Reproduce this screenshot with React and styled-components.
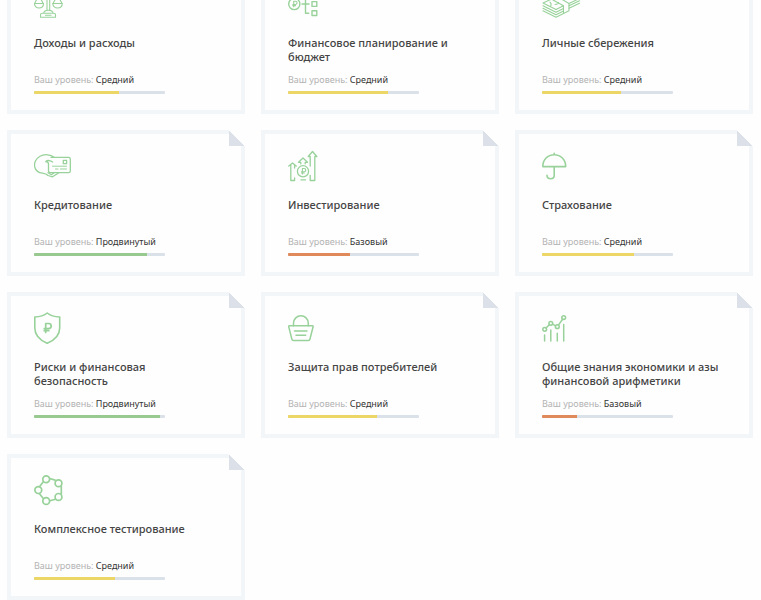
import React from "react";
import styled, { createGlobalStyle } from "styled-components";

const GlobalStyle = createGlobalStyle`
  body {
    margin: 0;
    background-color: #fefefe;
    font-family: "Noto Sans", "Open Sans", sans-serif;
    color: #444444;
    overflow-x: hidden;
  }
`;

const Page = styled.main`
  overflow: hidden;
`;

// the list is shown scrolled a little, so the first row starts above the page
const CardGrid = styled.div`
  display: grid;
  grid-template-columns: repeat(3, 1fr);
  gap: 16px;
  padding: 0 8px 0 7px;
  margin-top: -32px;
`;

const Card = styled.article`
  position: relative;
  box-sizing: border-box;
  display: flex;
  flex-direction: column;
  padding: 16px 23px;
  border: 4px solid #f3f6f9;

  &::after {
    content: "";
    position: absolute;
    top: -4px;
    right: -4px;
    width: 16px;
    height: 16px;
    background: linear-gradient(45deg, #dce1e9 50%, #fefefe 50%);
  }
`;

const Icon = styled.svg`
  width: 40px;
  height: 32px;
  fill: none;
  stroke: #98d29a;
  stroke-width: ${(props) => props.$weight || 1.3};
  stroke-linecap: round;
  stroke-linejoin: round;
`;

const Title = styled.h2`
  margin: 16px 0 0;
  min-height: 28px;
  font-size: 11px;
  line-height: 14px;
  font-weight: 500;
`;

const Level = styled.p`
  margin: 10px 0 5px;
  font-size: 9px;
  line-height: 12px;
  color: #b3b3b3;
`;

const LevelName = styled.span`
  color: #333333;
`;

const Track = styled.div`
  width: 131px;
  max-width: 100%;
  height: 3px;
  border-radius: 1px;
  background-color: #dbe1e8;
  overflow: hidden;
`;

const Fill = styled.div`
  height: 100%;
  background-color: ${(props) => props.$color};
`;

const LEVELS = {
  basic: { name: "Базовый", color: "#e08a5c" },
  middle: { name: "Средний", color: "#ecd766" },
  advanced: { name: "Продвинутый", color: "#98c98f" },
};

const Ruble = ({ x, y, size, weight }) => (
  <g transform={`translate(${x} ${y}) scale(${size / 10})`}>
    <path
      d="M-2 5V-5H1.2a2.9 2.9 0 0 1 0 5.8H-3.6M-3.6 3H1.4"
      vectorEffect="non-scaling-stroke"
      strokeWidth={weight}
    />
  </g>
);

const ScalesIcon = () => (
  <Icon viewBox="0 0 40 32" $weight={1.1}>
    <path d="M13 5v17M15.7 5v17M4.8 7h19M4.8 7L.6 15.5M4.8 7l4.4 8.5M23.6 7L19 15.5M23.6 7l4.4 8.5" />
    <path d="M.5 15.5h9c0 6-9 6-9 0zM18.8 15.5h9.4c0 6-9.4 6-9.400 0z" />
    <path d="M6.5 29.3v-2.500c0-1 .8-1.500 2-1.500h11c1.300 0 2 .5 2 1.500v2.500zM9.500 25.300c.5-2 2-3 4.800-3s4.500 1 5 3M11.500 27.300h5.500" />
  </Icon>
);

const PlanningIcon = () => (
  <Icon viewBox="0 0 40 32" $weight={1.4}>
    <circle cx="6.300" cy="16" r="5.600" />
    <Ruble x={6.8} y={16} size={5.5} weight={1.1} />
    <path d="M14 16h7M20.500 7h-3v18.300h3.200" />
    <rect x="24" y="4.500" width="4.800" height="4.800" />
    <rect x="24" y="13.600" width="4.800" height="4.800" />
    <rect x="24" y="22.700" width="4.800" height="4.800" />
  </Icon>
);

const MoneyIcon = () => (
  <Icon viewBox="0 0 40 32" $weight={1.1}>
    <path d="M14 21.500L1 15 25 4l12.500 6.500-10.500 5" />
    <path d="M1 17.700l13 6.600 7.500-3.800M27 17.800l10.500-5" />
    <path d="M1 20.200l13 6.600 7.500-3.800M27 20.200l10.500-5" />
    <path d="M1 22.700l13 6.600 7.500-3.800" />
    <path d="M14 21.500l7.500-3.700v7.700l5.500-2.700v-7.300L16 9" />
    <path d="M21.500 17.800L11 12M8 14.200c1.500 1.500 1.500 2.500.5 3.800M24 8c1.500 2 4 2.500 6 1.500M16.500 14.500c-.5 1.300-2 2-3.500 2" />
  </Icon>
);

const CreditIcon = () => (
  <Icon viewBox="0 0 40 32">
    <path d="M20 7.300C17 4.500 10.500 3.700 6 6.300 1.500 8.800-.3 13.500.9 17.500c1 3.600 4 5.300 7.600 5.700 2.500.3 4 .5 5.500 2.300l4.500 1.300 6-3.800" />
    <path d="M17 7.300h17.600c1 0 1.700.7 1.700 1.700v12c0 1-.7 1.700-1.700 1.700H16.500c-1.500 0-2-.7-2-1.700V14c0-1.700-1-2.300-2.800-2.300 1.300-1.400 4.300-1.300 7 .3" />
    <path d="M14 22.700l3.500 2 2.500-2" />
    <rect x="29.300" y="10.300" width="3.300" height="3.400" />
    <path d="M18.500 16.200h14M21.500 19h2.500M26.500 19h6" strokeWidth="1" />
  </Icon>
);

const InvestIcon = () => (
  <Icon viewBox="0 0 40 32">
    <path d="M.8 16l3.700-3 3.700 3M2.800 15v15.500h3.800V28M6.600 15.500v2.500" />
    <path d="M10.500 12.300L15 8l4.500 4.300h-2.300v1.500M10.500 12.300h2.300v1.500M13 29.800h4.500" />
    <circle cx="15" cy="21.300" r="5.600" />
    <Ruble x={15.5} y={21.3} size={5.5} weight={1.1} />
    <path d="M22.200 16V6.500h-2l4.300-5 4.300 5h-2v24h-4.600v-5" />
  </Icon>
);

const UmbrellaIcon = () => (
  <Icon viewBox="0 0 40 32" $weight={1.6}>
    <path d="M.8 16.600C.8 9.500 5.700 4.700 12.200 4.700s11.500 4.800 11.500 11.900zM12.200 4.700V3.400M12.200 16.600v8.600c0 2.200-1.400 3.500-3.500 3.500s-3.700-1.300-3.700-3.500" />
  </Icon>
);

const ShieldIcon = () => (
  <Icon viewBox="0 0 40 32" $weight={1.6}>
    <path d="M13.200 1c3 2.500 7.300 3.800 12.500 4v11c0 7.500-4.700 12-12.500 15.300C5.400 28 .8 23.500.8 16V5C6 4.800 10.200 3.500 13.200 1z" />
    <Ruble x={13.5} y={16} size={9} weight={1.7} />
  </Icon>
);

const BasketIcon = () => (
  <Icon viewBox="0 0 40 32" $weight={1.5}>
    <path d="M5.500 13.800v-2.500c0-4.500 3.500-7.500 7.400-7.500s7.400 3 7.400 7.500v2.500" />
    <path d="M1.500 13.800h22.800c.7 0 1 .4.800 1l-3.200 12.400c-.2.800-.7 1.200-1.500 1.200h-15c-.8 0-1.300-.4-1.500-1.200L.7 14.800c-.2-.6.100-1 .8-1zM6.500 19h12.500M8 23.300h9.700" />
  </Icon>
);

const ChartIcon = () => (
  <Icon viewBox="0 0 40 32" $weight={1.5}>
    <circle cx="2.700" cy="17.300" r="1.900" />
    <circle cx="8.800" cy="11.300" r="1.900" />
    <circle cx="15.300" cy="14.700" r="1.900" />
    <circle cx="21.700" cy="5.600" r="1.900" />
    <path d="M4 16l3.400-3.400M10.500 12.200l3.100 1.600M16.400 13.100l4.200-5.900M2.600 23v6M8.800 18v11M15.300 21.300V29M21.700 12.500V29" />
  </Icon>
);

const NetworkIcon = () => (
  <Icon viewBox="0 0 40 32" $weight={1.7}>
    <circle cx="12.200" cy="5.300" r="3.400" />
    <circle cx="24.500" cy="9.300" r="3.400" />
    <circle cx="24.500" cy="22.900" r="3.400" />
    <circle cx="12.200" cy="27" r="3.400" />
    <circle cx="4.300" cy="16.100" r="3.400" />
    <path d="M15.700 4.500l5.400 1.600M27.300 12v8M21.500 25.200l-5.700 1.600M9.500 24.700l-4-5M5.500 12.700l3.800-5" />
  </Icon>
);

const topics = [
  { title: "Доходы и расходы", level: "middle", value: 65, icon: ScalesIcon },
  { title: "Финансовое планирование и бюджет", level: "middle", value: 76, icon: PlanningIcon },
  { title: "Личные сбережения", level: "middle", value: 60, icon: MoneyIcon },
  { title: "Кредитование", level: "advanced", value: 86, icon: CreditIcon },
  { title: "Инвестирование", level: "basic", value: 47, icon: InvestIcon },
  { title: "Страхование", level: "middle", value: 70, icon: UmbrellaIcon },
  { title: "Риски и финансовая безопасность", level: "advanced", value: 96, icon: ShieldIcon },
  { title: "Защита прав потребителей", level: "middle", value: 68, icon: BasketIcon },
  { title: "Общие знания экономики и азы финансовой арифметики", level: "basic", value: 27, icon: ChartIcon },
  { title: "Комплексное тестирование", level: "middle", value: 62, icon: NetworkIcon },
];

const TopicCard = ({ title, level, value, icon: TopicIcon }) => {
  const { name, color } = LEVELS[level];

  return (
    <Card>
      <TopicIcon />
      <Title>{title}</Title>
      <Level>
        Ваш уровень: <LevelName>{name}</LevelName>
      </Level>
      <Track role="progressbar" aria-label={title} aria-valuenow={value}>
        <Fill $color={color} style={{ width: `${value}%` }} />
      </Track>
    </Card>
  );
};

const App = () => {
  return (
    <>
      <GlobalStyle />
      <Page>
        <CardGrid>
          {topics.map((topic) => (
            <TopicCard key={topic.title} {...topic} />
          ))}
        </CardGrid>
      </Page>
    </>
  );
};

export default App;
